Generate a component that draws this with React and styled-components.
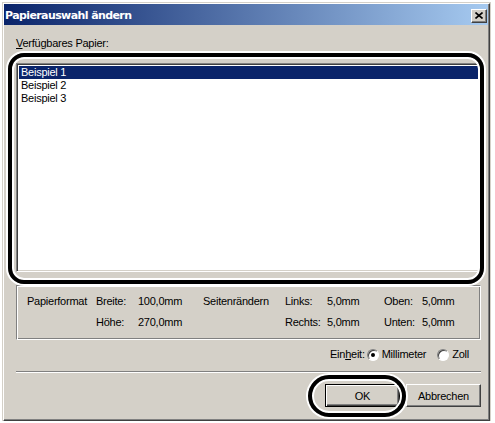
import React from "react";
import styled, { createGlobalStyle } from "styled-components";

const GlobalStyle = createGlobalStyle`
  html, body {
    margin: 0;
    padding: 0;
    background: #ffffff;
  }
  body {
    font-family: "Liberation Sans", Arial, sans-serif;
    font-size: 11px;
    letter-spacing: -0.25px;
    color: #000000;
  }
`;

const papers = ["Beispiel 1", "Beispiel 2", "Beispiel 3"];

export default function App() {
  return (
    <>
      <GlobalStyle />
      <Window>
        <TitleBar>
          <Title>Papierauswahl ändern</Title>
          <CloseButton aria-label="Schließen">
            <svg width="8" height="7" viewBox="0 0 8 7">
              <path d="M0.5 0.5 L7.5 6.5 M7.5 0.5 L0.5 6.5" stroke="#000" strokeWidth="1.6" />
            </svg>
          </CloseButton>
        </TitleBar>

        <Body>
          <Label>
            <u>V</u>erfügbares Papier:
          </Label>
          <ListBox>
            {papers.map((p, i) => (
              <ListItem key={p} $selected={i === 0}>
                {p}
              </ListItem>
            ))}
          </ListBox>

          <InfoGroup>
            <span>Papierformat</span>
            <span>Breite:</span>
            <span>100,0mm</span>
            <span>Seitenrändern</span>
            <span>Links:</span>
            <span>5,0mm</span>
            <span>Oben:</span>
            <span>5,0mm</span>

            <span />
            <span>Höhe:</span>
            <span>270,0mm</span>
            <span />
            <span>Rechts:</span>
            <span>5,0mm</span>
            <span>Unten:</span>
            <span>5,0mm</span>
          </InfoGroup>

          <UnitRow>
            <UnitLabel>
              Ein<u>h</u>eit:
            </UnitLabel>
            <RadioLabel>
              <Radio $checked />
              Millimeter
            </RadioLabel>
            <RadioLabel>
              <Radio />
              Zoll
            </RadioLabel>
          </UnitRow>

          <Separator />

          <ButtonRow>
            <Button $default>OK</Button>
            <Button>Abbrechen</Button>
          </ButtonRow>
        </Body>

        <Callout $left={4} $top={49} $width={476} $height={231} $radius={16} />
        <Callout $left={304} $top={371} $width={98} $height={42} $radius={21} />
      </Window>
    </>
  );
}

const Window = styled.div`
  position: relative;
  box-sizing: border-box;
  margin: 3px 0 0 3px;
  width: 487px;
  height: 418px;
  padding: 0 1px 1px 0;
  border: 1px solid;
  border-color: #ffffff #404040 #404040 #ffffff;
  box-shadow: inset -1px -1px #808080, 0 0 0 1px #d4d0c8;
  background: #d4d0c8;
  display: flex;
  flex-direction: column;
`;

const TitleBar = styled.div`
  height: 21px;
  display: flex;
  align-items: center;
  justify-content: space-between;
  padding: 0 1px 0 1px;
  background: linear-gradient(to right, #0a246a, #a6caf0);
`;

const Title = styled.span`
  color: #ffffff;
  font-family: "DejaVu Sans", Tahoma, sans-serif;
  font-weight: 700;
  font-size: 11px;
  letter-spacing: -0.6px;
  margin-top: 1px;
`;

const CloseButton = styled.div`
  box-sizing: border-box;
  width: 16px;
  height: 14px;
  margin-top: 2px;
  display: flex;
  align-items: center;
  justify-content: center;
  background: #d4d0c8;
  border: 1px solid;
  border-color: #ffffff #404040 #404040 #ffffff;
  box-shadow: inset -1px -1px #808080;
`;

const Body = styled.div`
  flex: 1;
  display: flex;
  flex-direction: column;
  padding: 12px 7px 0 12px;
`;

const Label = styled.div`
  line-height: 13px;
  margin-bottom: 13px;
`;

const ListBox = styled.div`
  box-sizing: border-box;
  height: 209px;
  background: #ffffff;
  border: 1px solid;
  border-color: #808080 #ffffff #ffffff #808080;
  box-shadow: inset 1px 1px #404040, inset -1px -1px #d4d0c8;
  padding: 2px 2px;
`;

const ListItem = styled.div`
  height: 13px;
  line-height: 13px;
  padding-left: 2px;
  background: ${(p) => (p.$selected ? "#0a246a" : "transparent")};
  color: ${(p) => (p.$selected ? "#ffffff" : "#000000")};
`;

const InfoGroup = styled.div`
  box-sizing: border-box;
  margin-top: 13px;
  height: 55px;
  border: 1px solid;
  border-color: #808080 #ffffff #ffffff #808080;
  box-shadow: inset 1px 1px #ffffff, inset -1px -1px #808080;
  padding: 9px 0 0 10px;
  display: grid;
  grid-template-columns: 69px 42px 65px 82px 42px 57px 38px auto;
  grid-auto-rows: 13px;
  row-gap: 8px;
  line-height: 13px;
  white-space: nowrap;
`;

const UnitRow = styled.div`
  margin-top: 8px;
  height: 13px;
  line-height: 13px;
  display: flex;
  align-items: center;
  justify-content: flex-end;
  gap: 11px;
  padding-right: 12px;
`;

const UnitLabel = styled.span`
  margin-right: -9px;
`;

const RadioLabel = styled.label`
  display: flex;
  align-items: center;
  gap: 3px;
`;

const Radio = styled.span`
  box-sizing: border-box;
  width: 12px;
  height: 12px;
  border-radius: 50%;
  background: #ffffff;
  border: 1px solid;
  border-color: #808080 #ffffff #ffffff #808080;
  box-shadow: inset 1px 1px #404040;
  display: flex;
  align-items: center;
  justify-content: center;
  &::after {
    content: "";
    width: 4px;
    height: 4px;
    border-radius: 50%;
    background: ${(p) => (p.$checked ? "#000000" : "transparent")};
  }
`;

const Separator = styled.div`
  margin-top: 10px;
  height: 1px;
  border-bottom: 1px solid #ffffff;
  background: #808080;
`;

const ButtonRow = styled.div`
  margin-top: 11px;
  display: flex;
  justify-content: flex-end;
  gap: 6px;
`;

const Button = styled.button`
  box-sizing: border-box;
  width: 75px;
  height: 23px;
  padding: 0;
  font-family: "Liberation Sans", Arial, sans-serif;
  font-size: 11px;
  letter-spacing: -0.25px;
  color: #000000;
  background: #d4d0c8;
  border: 1px solid;
  border-color: ${(p) =>
    p.$default ? "#000000" : "#ffffff #404040 #404040 #ffffff"};
  box-shadow: ${(p) =>
    p.$default
      ? "inset 1px 1px #ffffff, inset -1px -1px #404040, inset -2px -2px #808080"
      : "inset -1px -1px #808080"};
`;

const Callout = styled.div`
  position: absolute;
  left: ${(p) => p.$left}px;
  top: ${(p) => p.$top}px;
  width: ${(p) => p.$width}px;
  height: ${(p) => p.$height}px;
  box-sizing: border-box;
  border: 4px solid #000000;
  border-radius: ${(p) => p.$radius}px;
  box-shadow: 0 0 0 2px #ffffff, inset 0 0 0 2px #ffffff;
  pointer-events: none;
`;
